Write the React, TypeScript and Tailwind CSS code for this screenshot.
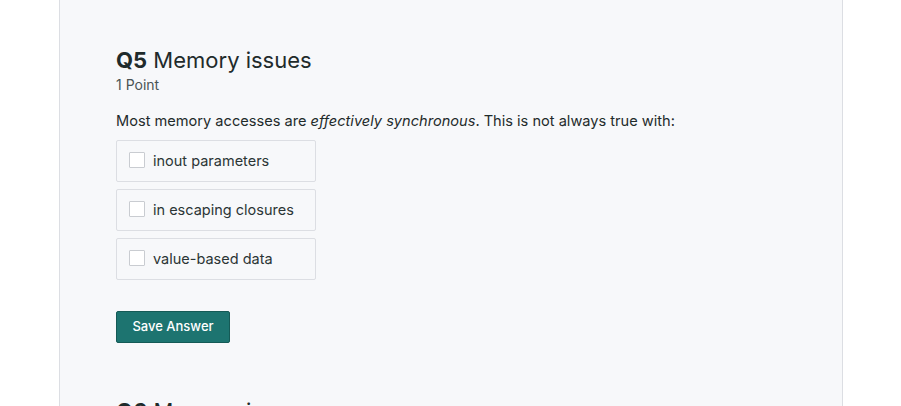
import React from "react";

const options = ["inout parameters", "in escaping closures", "value-based data"];

export default function App() {
  return (
    <div className="w-[901px] h-[406px] bg-white overflow-hidden" style={{ fontFamily: "Inter, 'Open Sans', sans-serif" }}>
      <div className="ml-[59px] w-[784px] h-[406px] bg-[#f7f8fa] border-x border-[#dcdee3] pl-[56px] pt-[45px] text-[#1f2b2b]">
        <h2 className="text-[22px] leading-[31px]">
          <span className="font-bold">Q5</span> Memory issues
        </h2>
        <div className="text-[14px] leading-[18px] text-[#4a5454]">1 Point</div>
        <p className="mt-[16px] text-[14.6px] leading-[22px]">
          Most memory accesses are <em>effectively synchronous</em>. This is not always true with:
        </p>
        <div className="mt-[8px] flex flex-col gap-[7px]">
          {options.map((o) => (
            <label key={o} className="w-[200px] h-[42px] flex items-center border border-[#dcdee3] rounded-[2px] bg-[#f7f8fa] pl-[12px]">
              <span className="w-[16px] h-[16px] border border-[#c9ccd1] bg-white rounded-[1px] mr-[8px] -mt-[3px]" />
              <span className="text-[14.5px] text-[#2b3535]">{o}</span>
            </label>
          ))}
        </div>
        <button className="mt-[31px] w-[114px] h-[32px] bg-[#1d7470] border border-[#155a56] rounded-[2px] text-white text-[13px] font-medium">
          Save Answer
        </button>
        <h2 className="mt-[53px] text-[22px] leading-[31px]">
          <span className="font-bold">Q6</span> Memory issues
        </h2>
      </div>
    </div>
  );
}
